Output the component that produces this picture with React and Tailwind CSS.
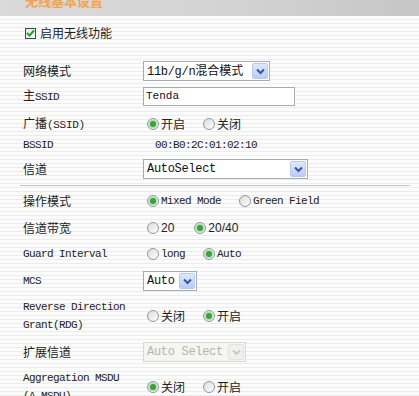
import React from "react";

const MONO = "font-['Liberation_Mono','Noto_Sans_CJK_SC',monospace]";
const CJK = "font-['Noto_Sans_CJK_SC','Liberation_Sans',sans-serif]";

function Radio({ checked }) {
  return (
    <span className="relative inline-flex w-[12px] h-[12px] shrink-0 items-center justify-center rounded-full border border-[#8a9aa8] bg-gradient-to-br from-[#dcdcd6] to-white">
      {checked && (
        <span className="w-[6px] h-[6px] rounded-full bg-[#3f9e3f] shadow-[0_0_0_1.5px_#b7e2b0]" />
      )}
    </span>
  );
}

function RadioItem({ checked, children, mono }) {
  return (
    <span className="inline-flex items-center mr-[18px]">
      <Radio checked={checked} />
      <span
        className={
          "ml-[2px] text-[#222] " +
          (mono ? MONO + " text-[11px] tracking-[-0.6px]" : CJK + " text-[12px]")
        }
      >
        {children}
      </span>
    </span>
  );
}

function Arrow({ disabled }) {
  return (
    <span
      className={
        "flex w-[16px] h-[16px] items-center justify-center rounded-[2px] border " +
        (disabled
          ? "border-[#e2e2e2] bg-[#f0f0ee]"
          : "border-[#b7c9ef] bg-gradient-to-b from-[#dfe8fb] to-[#b9cdf4]")
      }
    >
      <svg width="9" height="7" viewBox="0 0 9 7">
        <path
          d="M1 1.5 L4.5 5 L8 1.5"
          fill="none"
          stroke={disabled ? "#c9c9c9" : "#3157a8"}
          strokeWidth="2"
        />
      </svg>
    </span>
  );
}

function Select({ width, children, disabled, cjk }) {
  return (
    <div
      className={
        "flex h-[20px] items-center justify-between border pl-[3px] pr-[1px] " +
        (disabled ? "border-[#d8d8d4] bg-[#f5f5f2]" : "border-[#a5acb2] bg-white")
      }
      style={{ width }}
    >
      <span
        className={
          MONO +
          " text-[12px] tracking-[-0.3px] whitespace-nowrap " +
          (disabled ? "text-[#b4b4b4]" : "text-[#111]")
        }
      >
        {children}
      </span>
      <Arrow disabled={disabled} />
    </div>
  );
}

function Label({ children, mono }) {
  return (
    <div
      className={
        "w-[120px] shrink-0 text-[#222] leading-[18px] " +
        (mono ? MONO + " text-[11px] tracking-[-0.6px]" : CJK + " text-[12px]")
      }
    >
      {children}
    </div>
  );
}

function Row({ h, mt, label, mono, children }) {
  return (
    <div className="flex items-center pl-[23px]" style={{ height: h, marginTop: mt }}>
      <Label mono={mono}>{label}</Label>
      <div className="flex items-center">{children}</div>
    </div>
  );
}

export default function App() {
  return (
    <div className="w-[419px] h-[396px] overflow-hidden relative bg-[repeating-linear-gradient(180deg,#fcfcfc_0px,#fcfcfc_3px,#ececec_3px,#ececec_4px)]">
      {/* header */}
      <div className="h-[16px] bg-gradient-to-r from-[#dadada] via-[#d4d4d4] to-[#c6c6c6] overflow-hidden pl-[25px]">
        <div
          className={
            CJK +
            " text-[13px] font-bold text-[#f2a44c] leading-[16px] mt-[-7px] whitespace-nowrap"
          }
        >
          无线基本设置
        </div>
      </div>

      {/* enable */}
      <div className="flex items-center h-[22px] mt-[6px] pl-[25px]">
        <span className="flex w-[11px] h-[11px] items-center justify-center border border-[#1c5180] bg-gradient-to-br from-[#e4e4e0] to-white">
          <svg width="9" height="8" viewBox="0 0 9 8">
            <path d="M1 4 L3.5 6.5 L8 1.5" fill="none" stroke="#21a121" strokeWidth="2" />
          </svg>
        </span>
        <span className={CJK + " ml-[4px] text-[12px] text-[#222]"}>启用无线功能</span>
      </div>

      <Row h={22} mt={16} label="网络模式">
        <Select width={127}>
          <span>11b/g/n</span>
          <span className={CJK + " tracking-normal"}>混合模式</span>
        </Select>
      </Row>

      <Row h={22} mt={3} label={<>主<span className={MONO + " text-[11px] tracking-[-0.6px]"}>SSID</span></>}>
        <div className="flex h-[19px] w-[152px] items-center border border-[#a5acb2] bg-white pl-[2px]">
          <span className={MONO + " text-[11px] text-[#111]"}>Tenda</span>
        </div>
      </Row>

      <Row
        h={22}
        mt={6}
        label={<>广播<span className={MONO + " text-[11px] tracking-[-0.3px]"}>(SSID)</span></>}
      >
        <span className="ml-[4px]" />
        <RadioItem checked>开启</RadioItem>
        <RadioItem>关闭</RadioItem>
      </Row>

      <Row h={20} mt={0} mono label="BSSID">
        <span className={MONO + " ml-[12px] text-[11px] tracking-[-0.6px] text-[#222]"}>
          00:B0:2C:01:02:10
        </span>
      </Row>

      <Row h={22} mt={3} label="信道">
        <Select width={165}>AutoSelect</Select>
      </Row>

      <div className="ml-[20px] mr-[9px] mt-[5px] h-[1px] bg-[#c6c6c6]" />

      <Row h={22} mt={4} label="操作模式">
        <span className="ml-[4px]" />
        <RadioItem checked mono>Mixed Mode</RadioItem>
        <RadioItem mono>Green Field</RadioItem>
      </Row>

      <Row h={22} mt={5} label="信道带宽">
        <span className="ml-[4px]" />
        <span className="inline-flex items-center mr-[20px]">
          <Radio />
          <span className={"ml-[2px] text-[12px] text-[#222] font-['Liberation_Sans',sans-serif]"}>20</span>
        </span>
        <span className="inline-flex items-center">
          <Radio checked />
          <span className={"ml-[2px] text-[12px] text-[#222] font-['Liberation_Sans',sans-serif]"}>20/40</span>
        </span>
      </Row>

      <Row h={22} mt={4} mono label="Guard Interval">
        <span className="ml-[4px]" />
        <RadioItem mono>long</RadioItem>
        <RadioItem checked mono>Auto</RadioItem>
      </Row>

      <Row h={22} mt={5} mono label="MCS">
        <Select width={54}>Auto</Select>
      </Row>

      <Row
        h={36}
        mt={6}
        mono
        label={
          <>
            Reverse Direction
            <br />
            Grant(RDG)
          </>
        }
      >
        <span className="ml-[4px]" />
        <RadioItem>关闭</RadioItem>
        <RadioItem checked>开启</RadioItem>
      </Row>

      <Row h={22} mt={7} label="扩展信道">
        <Select width={103} disabled>Auto Select</Select>
      </Row>

      <Row
        h={36}
        mt={6}
        mono
        label={
          <>
            Aggregation MSDU
            <br />
            (A-MSDU)
          </>
        }
      >
        <span className="ml-[4px]" />
        <RadioItem checked>关闭</RadioItem>
        <RadioItem>开启</RadioItem>
      </Row>
    </div>
  );
}
